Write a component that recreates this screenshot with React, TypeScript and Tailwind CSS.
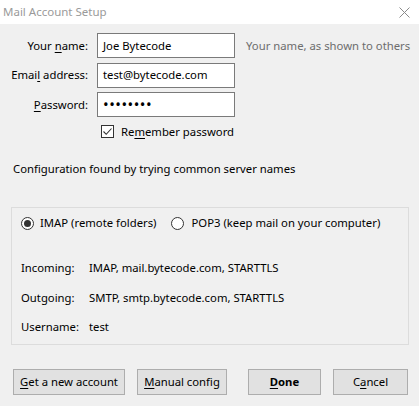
import React from "react";

const font = { fontFamily: '"Noto Sans", "Open Sans", Arial, sans-serif' };

function U({ children }: { children: React.ReactNode }) {
  return <span className="underline underline-offset-2">{children}</span>;
}

function Row({ label, children }: { label: React.ReactNode; children: React.ReactNode }) {
  return (
    <div className="flex items-center h-[25px]">
      <div className="w-[89px] text-right pr-px whitespace-nowrap">{label}</div>
      <div className="ml-[8px] flex items-center">{children}</div>
    </div>
  );
}

function Input({ value, dots }: { value: string; dots?: boolean }) {
  return (
    <div className="w-[138px] h-[25px] border border-[#7a7a7a] bg-white flex items-center px-[5px]">
      {dots ? (
        <span className="text-[15px] tracking-[0.5px] leading-none">{value}</span>
      ) : (
        <span className="whitespace-nowrap">{value}</span>
      )}
    </div>
  );
}

function Btn({ w, children, bold }: { w: string; children: React.ReactNode; bold?: boolean }) {
  return (
    <div
      className={`${w} h-[26px] border border-[#adadad] bg-[#e1e1e1] flex items-center justify-center whitespace-nowrap ${
        bold ? "font-bold" : ""
      }`}
    >
      {children}
    </div>
  );
}

export default function App() {
  return (
    <div className="w-[419px] h-[406px] bg-[#f0f0f0] text-[11.3px] text-black leading-[16px] overflow-hidden" style={font}>
      <div className="h-6 bg-white flex items-center justify-between pl-[3px] pr-[9px]">
        <span className="text-[#9a9a9a] text-[11.5px]">Mail Account Setup</span>
        <svg width="11" height="11" viewBox="0 0 11 11">
          <path d="M0.5 0.5 L10.5 10.5 M10.5 0.5 L0.5 10.5" stroke="#8a8a8a" strokeWidth="1" />
        </svg>
      </div>

      <div className="pt-[9px] flex flex-col gap-[4.5px]">
        <div className="flex items-center">
          <Row label={<>Your <U>n</U>ame:</>}>
            <Input value="Joe Bytecode" />
          </Row>
          <span className="ml-[11px] text-[#6d6d6d] whitespace-nowrap">Your name, as shown to others</span>
        </div>
        <Row label={<>Emai<U>l</U> address:</>}>
          <Input value="test@bytecode.com" />
        </Row>
        <Row label={<><U>P</U>assword:</>}>
          <Input value="••••••••" dots />
        </Row>
      </div>

      <div className="mt-[8px] ml-[101px] flex items-center h-[13px]">
        <div className="w-[13px] h-[13px] border border-[#333] bg-white flex items-center justify-center">
          <svg width="11" height="11" viewBox="0 0 11 11">
            <path d="M1.5 5.5 L4.2 8.3 L9.5 2.5" stroke="#333" strokeWidth="1.1" fill="none" />
          </svg>
        </div>
        <span className="ml-[7px]">Re<U>m</U>ember password</span>
      </div>

      <div className="mt-[23px] ml-[13px] whitespace-nowrap">Configuration found by trying common server names</div>

      <div className="mt-[30px] ml-[11px] w-[398px] h-[138px] border border-[#dcdcdc] flex flex-col">
        <div className="flex items-center mt-[8px] ml-[9px] h-[14px] whitespace-nowrap">
          <div className="w-[13px] h-[13px] rounded-full border border-[#333] bg-white flex items-center justify-center">
            <div className="w-[7px] h-[7px] rounded-full bg-[#333]" />
          </div>
          <span className="ml-[6px]">IMAP (remote folders)</span>
          <div className="ml-[15px] w-[13px] h-[13px] rounded-full border border-[#333] bg-white" />
          <span className="ml-[7px]">POP3 (keep mail on your computer)</span>
        </div>
        <div className="mt-[30px] ml-[9px] flex flex-col gap-[13.5px] whitespace-nowrap">
          <div className="flex">
            <span className="w-[68px]">Incoming:</span>
            <span>IMAP, mail.bytecode.com, STARTTLS</span>
          </div>
          <div className="flex">
            <span className="w-[68px]">Outgoing:</span>
            <span>SMTP, smtp.bytecode.com, STARTTLS</span>
          </div>
          <div className="flex">
            <span className="w-[68px]">Username:</span>
            <span>test</span>
          </div>
        </div>
      </div>

      <div className="mt-[24px] flex items-center">
        <div className="ml-[13px]">
          <Btn w="w-[112px]"><span><U>G</U>et a new account</span></Btn>
        </div>
        <div className="ml-[12px]">
          <Btn w="w-[90px]"><span><U>M</U>anual config</span></Btn>
        </div>
        <div className="ml-[21px]">
          <Btn w="w-[73px]" bold><span><U>D</U>one</span></Btn>
        </div>
        <div className="ml-[12px]">
          <Btn w="w-[75px]"><span>C<U>a</U>ncel</span></Btn>
        </div>
      </div>
    </div>
  );
}
